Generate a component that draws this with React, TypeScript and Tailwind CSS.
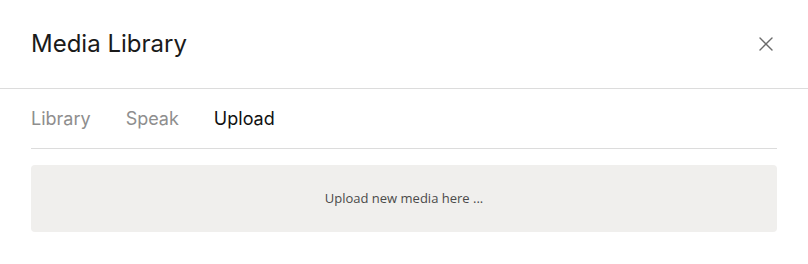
import { X } from "lucide-react";

const tabs = ["Library", "Speak", "Upload"];

const App = () => {
  const active = "Upload";

  return (
    <div className="w-[808px] h-[264px] bg-white font-['Inter',sans-serif]">
      {/* Header */}
      <div className="flex items-center justify-between h-[89px] px-[31px] border-b border-[#dcdcdc]">
        <h2 className="text-[24px] text-[#1a1a1a] font-normal">Media Library</h2>
        <button type="button" className="text-[#6b6b6b] -mr-px">
          <X size={24} strokeWidth={1.4} />
        </button>
      </div>

      {/* Tabs */}
      <div className="px-[31px]">
        <div className="flex gap-[35px] h-[60px] items-center border-b border-[#dcdcdc]">
          {tabs.map((tab) => (
            <span
              key={tab}
              className={`text-[18px] ${tab === active ? "text-[#111111]" : "text-[#8e8e8e]"}`}
            >
              {tab}
            </span>
          ))}
        </div>

        {/* Upload area */}
        <div className="mt-4 h-[67px] rounded-[4px] bg-[#f0efed] flex items-center justify-center">
          <span className="text-[13px] text-[#4a4a4a] font-['Open_Sans',sans-serif]">
            Upload new media here ...
          </span>
        </div>
      </div>
    </div>
  );
};

export default App;
